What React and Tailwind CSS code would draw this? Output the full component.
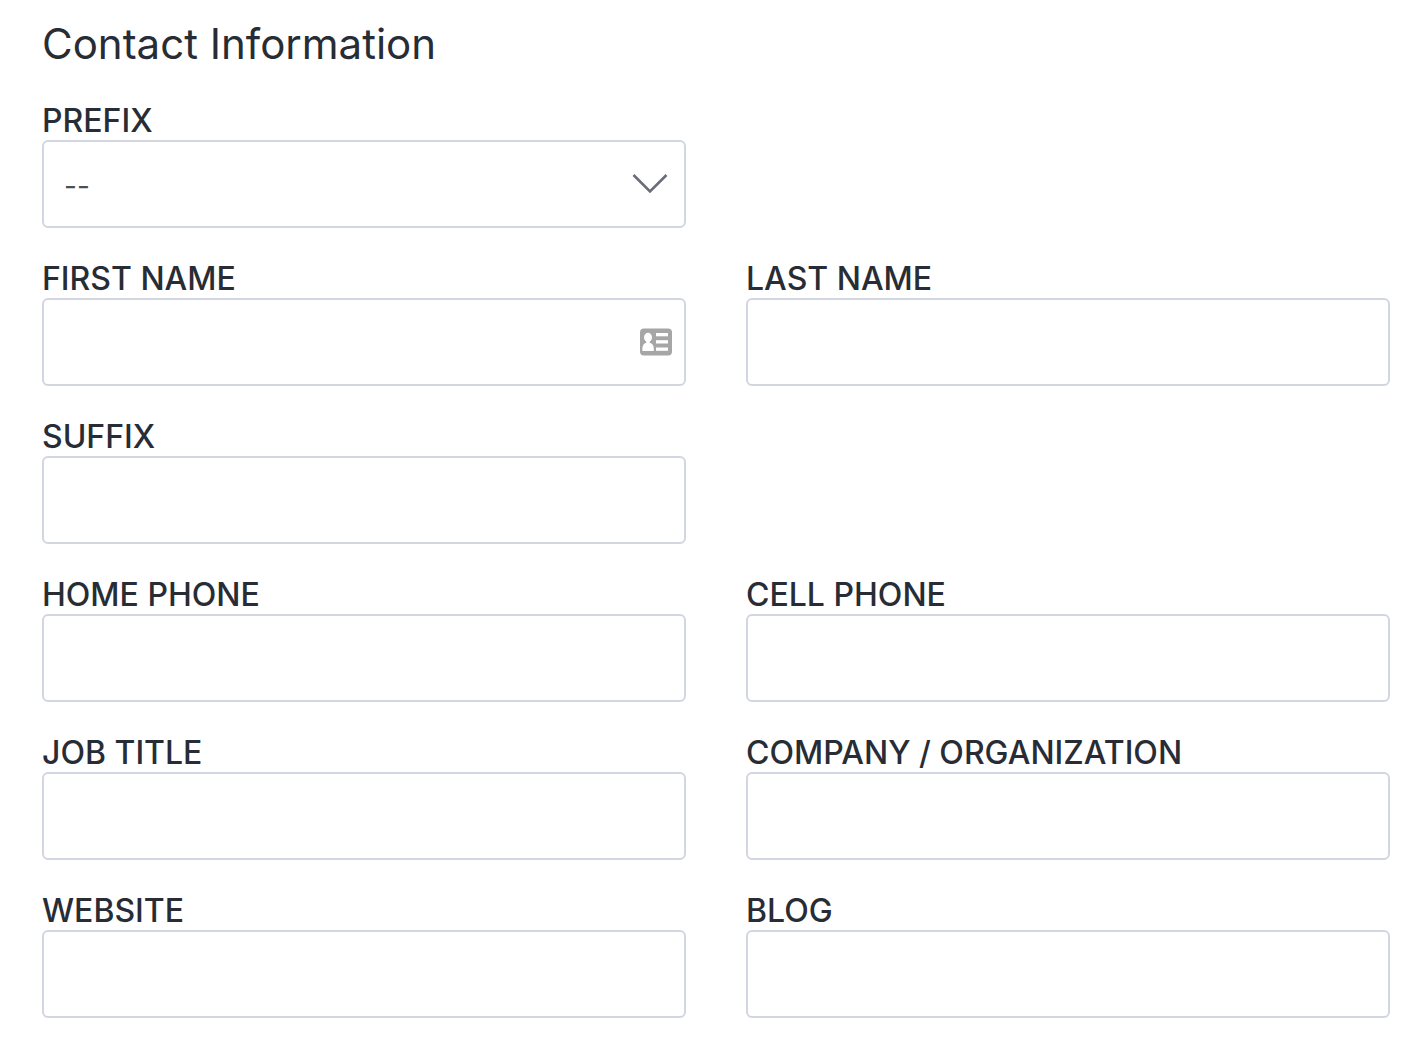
import React, { useState } from 'react';

const FIELDS = [
  { id: 'firstName', label: 'First Name', autofill: true, className: 'col-start-1' },
  { id: 'lastName', label: 'Last Name' },
  { id: 'suffix', label: 'Suffix', className: 'col-start-1' },
  { id: 'homePhone', label: 'Home Phone', type: 'tel', className: 'col-start-1' },
  { id: 'cellPhone', label: 'Cell Phone', type: 'tel' },
  { id: 'jobTitle', label: 'Job Title' },
  { id: 'company', label: 'Company / Organization' },
  { id: 'website', label: 'Website' },
  { id: 'blog', label: 'Blog' },
];

const controlClass =
  'block w-full h-22 appearance-none rounded-md border-2 border-[#d2d6e1] bg-white px-5 text-[28px] text-[#4b4d57] outline-none focus:border-[#8f97ad]';

const ChevronIcon = () => (
  <svg
    className="pointer-events-none absolute right-4 top-1/2 h-6 w-10 -translate-y-1/2"
    viewBox="0 0 40 24"
    fill="none"
    stroke="#6a6d78"
    strokeWidth="2.6"
    aria-hidden="true"
  >
    <path d="M3.5 3 L20 19.5 L36.5 3" />
  </svg>
);

const ContactCardIcon = () => (
  <svg
    className="pointer-events-none absolute right-3.5 top-1/2 h-7 w-8 -translate-y-1/2"
    viewBox="0 0 32 28"
    aria-hidden="true"
  >
    <rect y="0.5" width="32" height="27" rx="4" fill="#a6a6a6" />
    <g fill="#fff">
      <ellipse cx="8" cy="9.4" rx="4" ry="4.6" />
      <path d="M6.4 12.5h3.2v2.3c2.8 0.7 4.2 2.8 4.2 5.6v2.6H2.4v-2.6c0-2.8 1.2-4.9 4-5.6z" />
      <rect x="16" y="5" width="12" height="3.3" />
      <rect x="16" y="12.2" width="12" height="3.3" />
      <rect x="16" y="19.5" width="12" height="3.3" />
    </g>
  </svg>
);

const Field = ({ id, label, className, children }) => (
  <div className={className}>
    <label htmlFor={id} className="block text-[32px] font-medium uppercase leading-9.5 text-[#282c35]">
      {label}
    </label>
    <div className="relative">{children}</div>
  </div>
);

const App = () => {
  const [formData, setFormData] = useState({ prefix: '' });

  const handleChange = (e) => {
    setFormData({ ...formData, [e.target.name]: e.target.value });
  };

  return (
    <form className="bg-white pt-3.5 pr-9.5 pb-11 pl-10.5 font-['Inter',sans-serif]">
      <h1 className="mb-7 text-[42px] font-normal leading-15 text-[#282c35]">Contact Information</h1>

      <div className="grid grid-cols-2 gap-x-15 gap-y-8">
        <Field id="prefix" label="Prefix">
          <select
            id="prefix"
            name="prefix"
            className={`${controlClass} pt-1`}
            value={formData.prefix}
            onChange={handleChange}
          >
            <option value="">--</option>
            <option value="Dr.">Dr.</option>
            <option value="Mr.">Mr.</option>
            <option value="Mrs.">Mrs.</option>
            <option value="Ms.">Ms.</option>
          </select>
          <ChevronIcon />
        </Field>

        {FIELDS.map(({ id, label, type = 'text', autofill, className }) => (
          <Field key={id} id={id} label={label} className={className}>
            <input
              id={id}
              name={id}
              type={type}
              className={controlClass}
              value={formData[id] || ''}
              onChange={handleChange}
            />
            {autofill && <ContactCardIcon />}
          </Field>
        ))}
      </div>
    </form>
  );
};

export default App;
